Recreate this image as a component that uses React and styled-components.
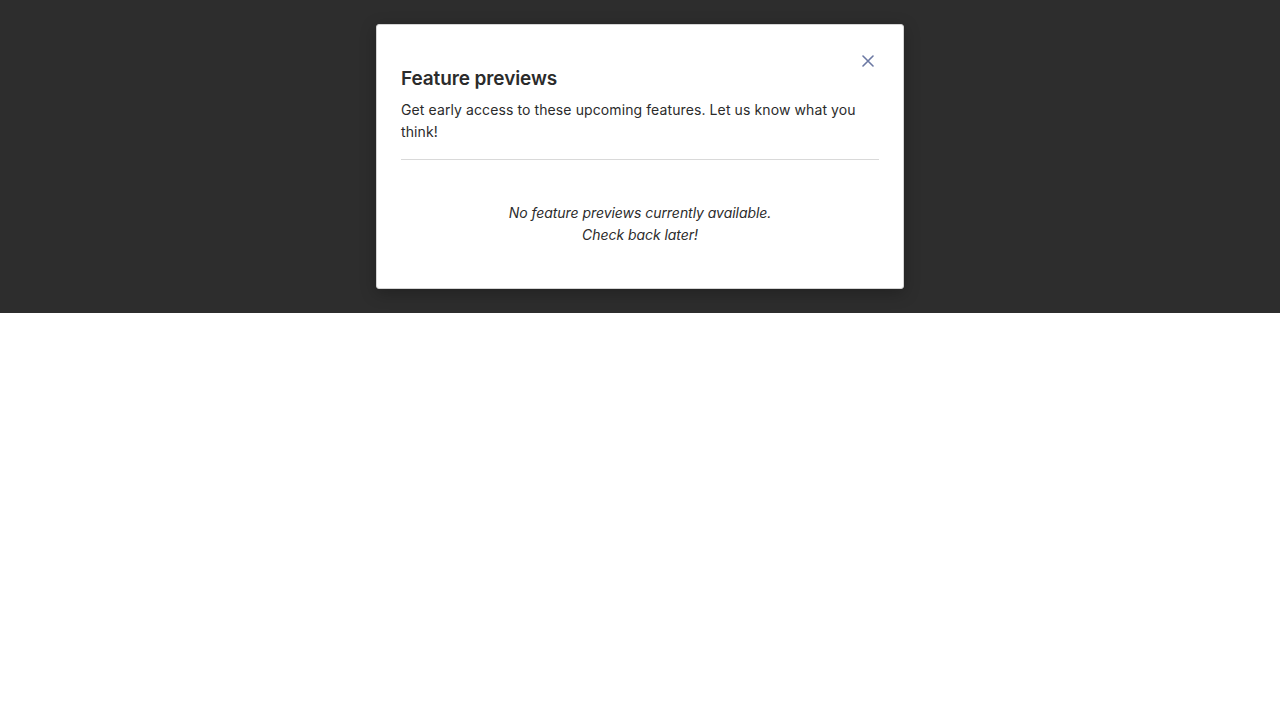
import React from "react"
import styled, { createGlobalStyle } from "styled-components"

const GlobalStyle = createGlobalStyle`
*, *::before, *::after {
  box-sizing: border-box;
}
html, body {
  margin: 0;
  padding: 0;
  background: #ffffff;
  font-family: Inter, "Noto Sans", sans-serif;
}
`

const Backdrop = styled.div`
background: #2d2d2d;
padding: 24px 0;
display: flex;
justify-content: center;
`

const Modal = styled.div`
position: relative;
width: 528px;
background: #ffffff;
border: 1px solid #d4d4d4;
border-radius: 3px;
box-shadow: 0 4px 16px rgba(0, 0, 0, 0.25);
padding: 40px 24px 0;
color: #2b2b2b;
`

const Close = styled.button`
position: absolute;
top: 24px;
right: 23px;
width: 24px;
height: 24px;
padding: 0;
border: 0;
background: none;
display: flex;
align-items: center;
justify-content: center;
color: #6b78a3;
cursor: pointer;
`

const Title = styled.h2`
margin: 0 0 6px;
font-size: 19px;
line-height: 28px;
font-weight: 600;
letter-spacing: -0.1px;
`

const Lead = styled.p`
margin: 0;
font-size: 14px;
line-height: 22px;
letter-spacing: 0.1px;
padding-bottom: 16px;
border-bottom: 1px solid #d9d9d9;
`

const Empty = styled.div`
padding: 42px 0;
text-align: center;
font-style: italic;
font-size: 14px;
line-height: 22px;
letter-spacing: -0.05px;
`

export default function App() {
  return (
    <>
      <GlobalStyle />
      <Backdrop>
        <Modal>
          <Close aria-label="Close">
            <svg width="12" height="12" viewBox="0 0 12 12" fill="none" stroke="currentColor" strokeWidth="1.6" strokeLinecap="round">
              <path d="M1 1l10 10M11 1L1 11" />
            </svg>
          </Close>
          <Title>Feature previews</Title>
          <Lead>Get early access to these upcoming features. Let us know what you think!</Lead>
          <Empty>
            No feature previews currently available.
            <br />
            Check back later!
          </Empty>
        </Modal>
      </Backdrop>
    </>
  )
}
